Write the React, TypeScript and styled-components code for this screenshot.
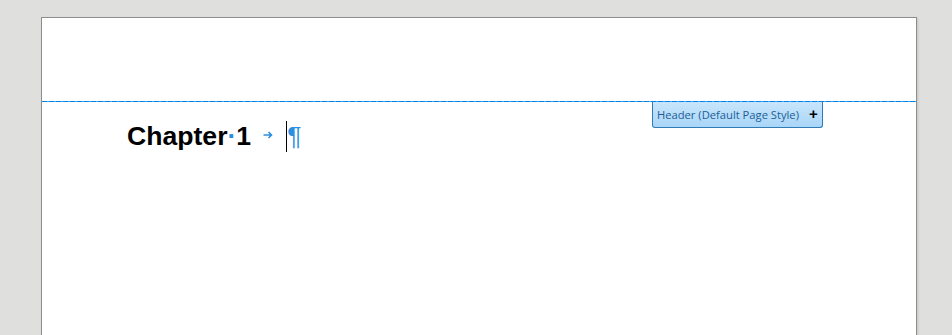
import React from 'react';
import styled, {createGlobalStyle} from 'styled-components';

const GlobalStyle = createGlobalStyle`
  html, body {
    margin: 0;
    padding: 0;
    background: #dfdfdd;
    overflow: hidden;
  }
  body {
    padding: 17px 0 0 41px;
  }
`;

const Page = styled.div`
  position: relative;
  width: 874px;
  height: 318px;
  background: #ffffff;
  border: 1px solid #8e8e8e;
  border-bottom: none;
  box-shadow: 1px 1px 2px rgba(0, 0, 0, 0.12);
`;

const HeaderArea = styled.div`
  height: 83px;
`;

const DashedRule = styled.div`
  height: 1px;
  background: repeating-linear-gradient(to right, #0082e6 0 5px, #4aa6ee 5px 7px);
`;

const HeaderTab = styled.div`
  position: absolute;
  left: 610px;
  top: 84px;
  height: 26px;
  display: flex;
  align-items: center;
  gap: 10px;
  padding: 0 4px 0 4px;
  box-sizing: border-box;
  background: linear-gradient(#c8e5fb, #a9d6f9);
  border: 1px solid #2f7bb8;
  border-top: none;
  border-radius: 0 0 3px 3px;
  font-family: "Open Sans", "Noto Sans", sans-serif;
  font-size: 11.2px;
  color: #1c5e96;
`;

const PlusMark = styled.span`
  font-family: "Liberation Sans", Arial, sans-serif;
  font-weight: bold;
  font-size: 15px;
  color: #000;
  line-height: 1;
  margin-top: -3px;
`;

const Body = styled.div`
  padding: 19px 0 0 85px;
`;

const Heading = styled.div`
  display: flex;
  align-items: baseline;
  font-family: "Liberation Sans", Arial, sans-serif;
  font-weight: bold;
  font-size: 26.6px;
  line-height: 30px;
  color: #000;
`;

const Mark = styled.span<{weight?: string}>`
  color: #2b8ee0;
  font-weight: ${({weight}) => weight ?? 'bold'};
`;

const TabArrow = styled.svg`
  width: 10px;
  height: 8px;
  margin: 0 13px 0 12px;
  align-self: center;
  position: relative;
  top: -2px;
`;

const Cursor = styled.span`
  display: inline-block;
  width: 1px;
  height: 31px;
  background: #000;
  align-self: center;
`;

export default function App() {
  return (
    <>
      <GlobalStyle />
      <Page>
        <HeaderArea />
        <DashedRule />
        <HeaderTab>
          <span>Header (Default Page Style)</span>
          <PlusMark>+</PlusMark>
        </HeaderTab>
        <Body>
          <Heading>
            <span>Chapter</span>
            <Mark>·</Mark>
            <span>1</span>
            <TabArrow viewBox="0 0 10 8">
              <path d="M0.5 4 H8.5 M5.5 1 L8.5 4 L5.5 7" stroke="#2b8ee0" strokeWidth="1.6" fill="none" />
            </TabArrow>
            <Cursor />
            <Mark weight="normal">¶</Mark>
          </Heading>
        </Body>
      </Page>
    </>
  );
}
